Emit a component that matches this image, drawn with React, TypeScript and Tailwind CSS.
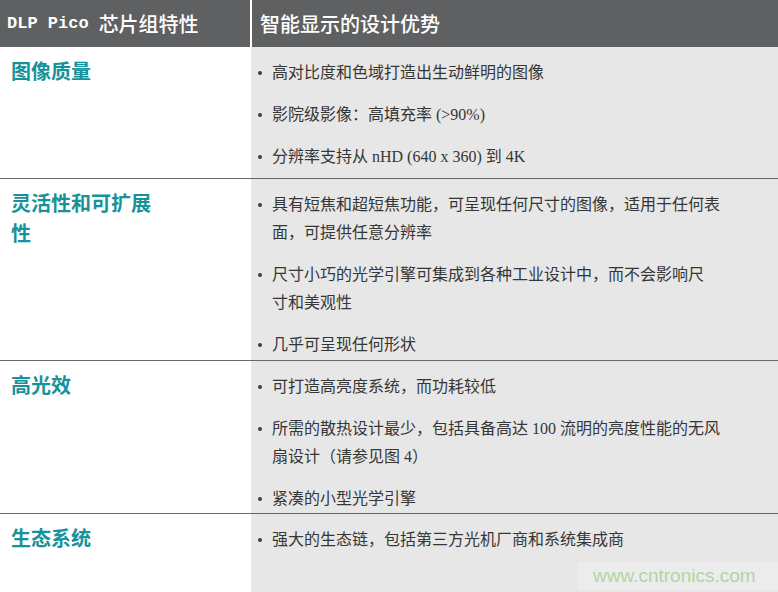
import React from 'react';

interface Row {
  label: string;
  height: string;
  items: React.ReactNode[];
}

const rows: Row[] = [
  {
    label: '图像质量',
    height: 'h-[132px]',
    items: [
      '高对比度和色域打造出生动鲜明的图像',
      '影院级影像：高填充率 (>90%)',
      '分辨率支持从 nHD (640 x 360) 到 4K',
    ],
  },
  {
    label: '灵活性和可扩展性',
    height: 'h-[182px]',
    items: [
      <>具有短焦和超短焦功能，可呈现任何尺寸的图像，适用于任何表<br />面，可提供任意分辨率</>,
      <>尺寸小巧的光学引擎可集成到各种工业设计中，而不会影响尺<br />寸和美观性</>,
      '几乎可呈现任何形状',
    ],
  },
  {
    label: '高光效',
    height: 'h-[153px]',
    items: [
      '可打造高亮度系统，而功耗较低',
      <>所需的散热设计最少，包括具备高达 100 流明的亮度性能的无风<br />扇设计（请参见图 4）</>,
      '紧凑的小型光学引擎',
    ],
  },
  {
    label: '生态系统',
    height: 'h-[78px]',
    items: ['强大的生态链，包括第三方光机厂商和系统集成商'],
  },
];

const FeatureRow: React.FC<{ row: Row; last: boolean }> = ({ row, last }) => (
  <div className={`flex ${row.height} ${last ? '' : 'border-b border-[#686868]'}`}>
    <div className="w-[251px] shrink-0 bg-white pl-[11px] pt-[9px]">
      <div className="w-[142px] text-[20px] leading-[30px] font-bold text-[#17929a] font-['Noto_Sans_CJK_SC',sans-serif]">
        {row.label}
      </div>
    </div>
    <div className="relative flex-1 bg-[#e7e7e7] pt-[12px] pl-[7px]">
      <ul className="flex flex-col gap-[14px]">
        {row.items.map((item, i) => (
          <li key={i} className="flex items-start">
            <span className="mt-[12px] mr-[10px] h-[4px] w-[4px] shrink-0 rounded-full bg-[#3c3c3c]" />
            <span className="whitespace-nowrap text-[16px] leading-[28px] text-[#363636] font-['Liberation_Serif','Noto_Sans_CJK_SC',serif]">
              {item}
            </span>
          </li>
        ))}
      </ul>
      {last && (
        <div className="absolute bottom-[2px] right-0 w-[200px] h-[28px] bg-[#ececec] flex items-center pl-[15px] text-[19px] text-[#b2d4a5] font-['Liberation_Sans',sans-serif]">
          www.cntronics.com
        </div>
      )}
    </div>
  </div>
);

export default function App() {
  return (
    <div className="w-[778px] h-[592px] overflow-hidden bg-white">
      <div className="flex h-[47px] gap-[2px] bg-white">
        <div className="w-[250px] bg-[#5f6062] flex items-center pl-[7px] text-white text-[20px] font-bold font-['Liberation_Mono','Noto_Sans_CJK_SC',monospace]">
          <span className="text-[17px] mr-[10px]">DLP Pico</span>
          <span className="font-['Noto_Sans_CJK_SC',sans-serif] font-medium">芯片组特性</span>
        </div>
        <div className="flex-1 bg-[#5f6062] flex items-center pl-[8px] text-white text-[20px] font-medium font-['Noto_Sans_CJK_SC',sans-serif]">
          智能显示的设计优势
        </div>
      </div>
      {rows.map((row, i) => (
        <FeatureRow key={i} row={row} last={i === rows.length - 1} />
      ))}
    </div>
  );
}
